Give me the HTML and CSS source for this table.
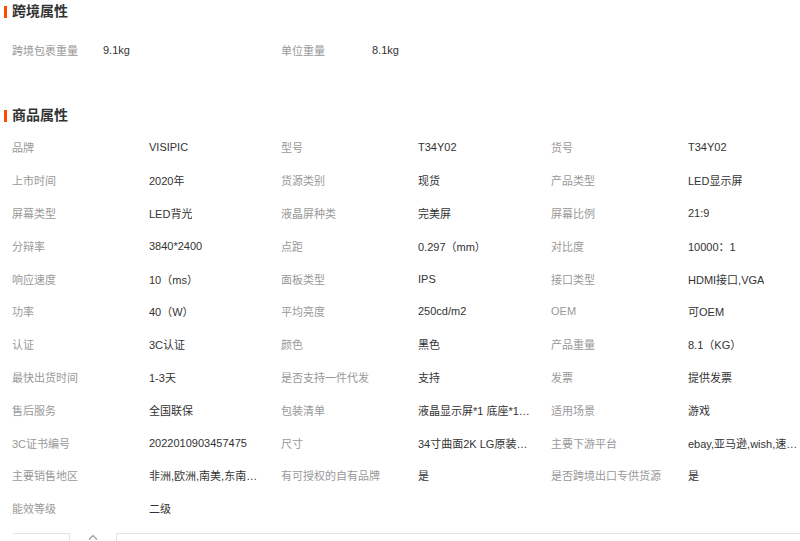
FILE: index.html
```html
<!DOCTYPE html>
<html lang="zh-CN">
<head>
<meta charset="utf-8">
<title>属性</title>
<link rel="stylesheet" href="styles.css">
</head>
<body>
<section class="block block-cross">
  <h2 class="title">跨境属性</h2>
  <div class="grid grid-cross">
    <div class="item"><span class="label">跨境包裹重量</span><span class="value">9.1kg</span></div>
    <div class="item"><span class="label">单位重量</span><span class="value">8.1kg</span></div>
  </div>
</section>
<section class="block block-goods">
  <h2 class="title">商品属性</h2>
  <div class="grid grid-goods">
    <div class="item"><span class="label">品牌</span><span class="value">VISIPIC</span></div>
    <div class="item"><span class="label">型号</span><span class="value">T34Y02</span></div>
    <div class="item"><span class="label">货号</span><span class="value">T34Y02</span></div>
    <div class="item"><span class="label">上市时间</span><span class="value">2020年</span></div>
    <div class="item"><span class="label">货源类别</span><span class="value">现货</span></div>
    <div class="item"><span class="label">产品类型</span><span class="value">LED显示屏</span></div>
    <div class="item"><span class="label">屏幕类型</span><span class="value">LED背光</span></div>
    <div class="item"><span class="label">液晶屏种类</span><span class="value">完美屏</span></div>
    <div class="item"><span class="label">屏幕比例</span><span class="value">21:9</span></div>
    <div class="item"><span class="label">分辩率</span><span class="value">3840*2400</span></div>
    <div class="item"><span class="label">点距</span><span class="value">0.297（mm）</span></div>
    <div class="item"><span class="label">对比度</span><span class="value">10000：1</span></div>
    <div class="item"><span class="label">响应速度</span><span class="value">10（ms）</span></div>
    <div class="item"><span class="label">面板类型</span><span class="value">IPS</span></div>
    <div class="item"><span class="label">接口类型</span><span class="value">HDMI接口,VGA</span></div>
    <div class="item"><span class="label">功率</span><span class="value">40（W）</span></div>
    <div class="item"><span class="label">平均亮度</span><span class="value">250cd/m2</span></div>
    <div class="item"><span class="label">OEM</span><span class="value">可OEM</span></div>
    <div class="item"><span class="label">认证</span><span class="value">3C认证</span></div>
    <div class="item"><span class="label">颜色</span><span class="value">黑色</span></div>
    <div class="item"><span class="label">产品重量</span><span class="value">8.1（KG）</span></div>
    <div class="item"><span class="label">最快出货时间</span><span class="value">1-3天</span></div>
    <div class="item"><span class="label">是否支持一件代发</span><span class="value">支持</span></div>
    <div class="item"><span class="label">发票</span><span class="value">提供发票</span></div>
    <div class="item"><span class="label">售后服务</span><span class="value">全国联保</span></div>
    <div class="item"><span class="label">包装清单</span><span class="value">液晶显示屏*1 底座*1 电源线*1 HDMI线*1</span></div>
    <div class="item"><span class="label">适用场景</span><span class="value">游戏</span></div>
    <div class="item"><span class="label">3C证书编号</span><span class="value">2022010903457475</span></div>
    <div class="item"><span class="label">尺寸</span><span class="value">34寸曲面2K LG原装屏显示器</span></div>
    <div class="item"><span class="label">主要下游平台</span><span class="value">ebay,亚马逊,wish,速卖通</span></div>
    <div class="item"><span class="label">主要销售地区</span><span class="value">非洲,欧洲,南美,东南亚,北美</span></div>
    <div class="item"><span class="label">有可授权的自有品牌</span><span class="value">是</span></div>
    <div class="item"><span class="label">是否跨境出口专供货源</span><span class="value">是</span></div>
    <div class="item"><span class="label">能效等级</span><span class="value">二级</span></div>
  </div>
</section>
<div class="footer">
  <div class="tab-left"></div>
  <div class="caret"><svg width="10" height="6" viewBox="0 0 10 6"><path d="M1 5.5 L5 1.5 L9 5.5" fill="none" stroke="#999" stroke-width="1.2"/></svg></div>
  <div class="tab-right"></div>
</div>
</body>
</html>
```
FILE: styles.css
```css
html, body {
  margin: 0;
  padding: 0;
  background: #fff;
}
body {
  width: 800px;
  height: 541px;
  overflow: hidden;
  font-family: "Liberation Sans", "Noto Sans CJK SC", sans-serif;
  font-size: 11px;
  color: #333;
}
.title {
  margin: 0;
  height: 22px;
  line-height: 22px;
  font-size: 14px;
  font-weight: bold;
  color: #333;
  padding-left: 12px;
  position: relative;
}
.title::before {
  content: "";
  position: absolute;
  left: 4px;
  top: 6px;
  width: 3px;
  height: 12px;
  background: #ff4a00;
}
.grid {
  display: grid;
  padding-left: 12px;
}
.grid-cross {
  margin-top: 11.6px;
  grid-template-columns: 269px 269px;
  grid-auto-rows: 32.8px;
}
.grid-goods {
  margin-top: 4.6px;
  grid-template-columns: 269px 270px 249px;
  grid-auto-rows: 32.8px;
}
.block-goods {
  margin-top: 38px;
}
.item {
  display: flex;
  align-items: center;
  white-space: nowrap;
  min-width: 0;
}
.label {
  color: #999;
  flex: none;
}
.grid-cross .label {
  width: 91px;
}
.grid-goods .label {
  width: 137px;
}
.value {
  color: #333;
  max-width: 112px;
  overflow: hidden;
  text-overflow: ellipsis;
}
.footer {
  margin-top: 8.6px;
  display: flex;
  align-items: flex-start;
  height: 20px;
}
.tab-left {
  margin-left: 13px;
  width: 56px;
  height: 20px;
  border-top: 1px solid #e3e3e3;
  border-right: 1px solid #e3e3e3;
}
.caret {
  width: 46px;
  display: flex;
  justify-content: center;
  padding-top: 1px;
}
.tab-right {
  flex: 1;
  height: 20px;
  border-top: 1px solid #e3e3e3;
  border-left: 1px solid #e3e3e3;
}
```
